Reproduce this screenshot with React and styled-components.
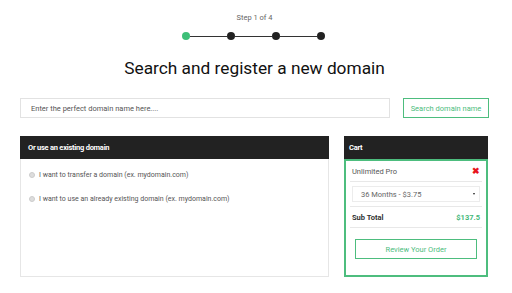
import React from 'react';
import styled, { createGlobalStyle } from 'styled-components';

const green = '#4dbd7e';

const Global = createGlobalStyle`
  body {
    margin: 0;
    background: #fff;
    font-family: Roboto, "Liberation Sans", sans-serif;
    color: #555;
  }
  * { box-sizing: border-box; }
`;

const Page = styled.div`
  width: 469px;
  margin-left: 20px;
  padding-top: 13px;
`;

const StepLabel = styled.div`
  text-align: center;
  font-size: 7.5px;
  color: #666;
  line-height: 10px;
`;

const Steps = styled.div`
  display: flex;
  align-items: center;
  justify-content: center;
  margin-top: 9px;
  margin-left: -2px;
`;

const Dot = styled.span`
  width: 8px;
  height: 8px;
  border-radius: 50%;
  background: ${(p) => (p.$active ? '#3dbf78' : '#222')};
`;

const Line = styled.span`
  width: 37px;
  height: 1px;
  background: #333;
`;

const Title = styled.h1`
  margin: 16px 0 0;
  text-align: center;
  font-size: 17.3px;
  font-weight: 400;
  color: #111;
  line-height: 24px;
`;

const SearchRow = styled.div`
  display: flex;
  gap: 13px;
  margin-top: 18px;
`;

const Input = styled.input`
  flex: 0 0 370px;
  height: 20px;
  border: 1px solid #e2e2e2;
  padding: 0 10px;
  font-family: inherit;
  font-size: 7.5px;
  color: #555;
  outline: none;
  &::placeholder { color: #555; }
`;

const GreenButton = styled.button`
  width: ${(p) => p.$w}px;
  height: ${(p) => p.$h}px;
  border: 1px solid ${green};
  background: #fff;
  color: ${green};
  font-family: inherit;
  font-size: 7.5px;
  padding: 0;
  cursor: pointer;
`;

const Panels = styled.div`
  display: flex;
  gap: 15px;
  margin-top: 18px;
`;

const Panel = styled.div`
  width: ${(p) => p.$w}px;
  display: flex;
  flex-direction: column;
`;

const PanelHead = styled.div`
  height: 23px;
  background: #222;
  color: #fff;
  font-size: 7.5px;
  font-weight: 700;
  letter-spacing: -0.25px;
  display: flex;
  align-items: center;
  padding-left: ${(p) => p.$pad}px;
`;

const PanelBody = styled.div`
  height: ${(p) => p.$h}px;
  border: ${(p) => (p.$accent ? `2px solid ${green}` : '1px solid #e6e6e6')};
  border-top: ${(p) => (p.$accent ? `2px solid ${green}` : 'none')};
  padding: ${(p) => p.$padding};
`;

const RadioRow = styled.label`
  display: flex;
  align-items: center;
  gap: 4px;
  height: 10px;
  font-size: 7px;
  color: #555;
  margin-bottom: 14px;
`;

const Radio = styled.span`
  width: 6px;
  height: 6px;
  border-radius: 50%;
  background: #ddd;
  border: 1px solid #ccc;
`;

const CartRow = styled.div`
  display: flex;
  align-items: center;
  justify-content: space-between;
  height: ${(p) => p.$h}px;
  border-bottom: 1px solid #e8e8e8;
  font-size: 7.5px;
  padding: 0 ${(p) => p.$px}px;
`;

const Remove = styled.span`
  color: #e8141b;
  font-weight: 700;
  font-size: 9px;
`;

const Select = styled.div`
  flex: 1;
  height: 16px;
  border: 1px solid #ececec;
  display: flex;
  align-items: center;
  justify-content: space-between;
  padding: 0 4px 0 8px;
  color: #666;
`;

const Caret = styled.span`
  width: 0;
  height: 0;
  border-left: 1.5px solid transparent;
  border-right: 1.5px solid transparent;
  border-top: 2px solid #222;
`;

const Strong = styled.span`
  font-weight: 700;
  color: ${(p) => p.$color || '#333'};
`;

const ButtonWrap = styled.div`
  display: flex;
  justify-content: center;
  margin-top: 11px;
`;

export default function App() {
  return (
    <>
      <Global />
      <Page>
        <StepLabel>Step 1 of 4</StepLabel>
        <Steps>
          <Dot $active />
          <Line />
          <Dot />
          <Line />
          <Dot />
          <Line />
          <Dot />
        </Steps>
        <Title>Search and register a new domain</Title>
        <SearchRow>
          <Input placeholder="Enter the perfect domain name here...." />
          <GreenButton $w={86} $h={20}>Search domain name</GreenButton>
        </SearchRow>
        <Panels>
          <Panel $w={309}>
            <PanelHead $pad={8}>Or use an existing domain</PanelHead>
            <PanelBody $h={118} $padding="11px 0 0 8px">
              <RadioRow><Radio />I want to transfer a domain (ex. mydomain.com)</RadioRow>
              <RadioRow><Radio />I want to use an already existing domain (ex. mydomain.com)</RadioRow>
            </PanelBody>
          </Panel>
          <Panel $w={144}>
            <PanelHead $pad={5}>Cart</PanelHead>
            <PanelBody $accent $h={118} $padding="0 4px">
              <CartRow $h={21} $px={2}>
                <span>Unlimited Pro</span>
                <Remove>✖</Remove>
              </CartRow>
              <CartRow $h={25} $px={2}>
                <Select>
                  <span>36 Months - $3.75</span>
                  <Caret />
                </Select>
              </CartRow>
              <CartRow $h={21} $px={2}>
                <Strong>Sub Total</Strong>
                <Strong $color="#45b87a">$137.5</Strong>
              </CartRow>
              <ButtonWrap>
                <GreenButton $w={122} $h={20}>Review Your Order</GreenButton>
              </ButtonWrap>
            </PanelBody>
          </Panel>
        </Panels>
      </Page>
    </>
  );
}
